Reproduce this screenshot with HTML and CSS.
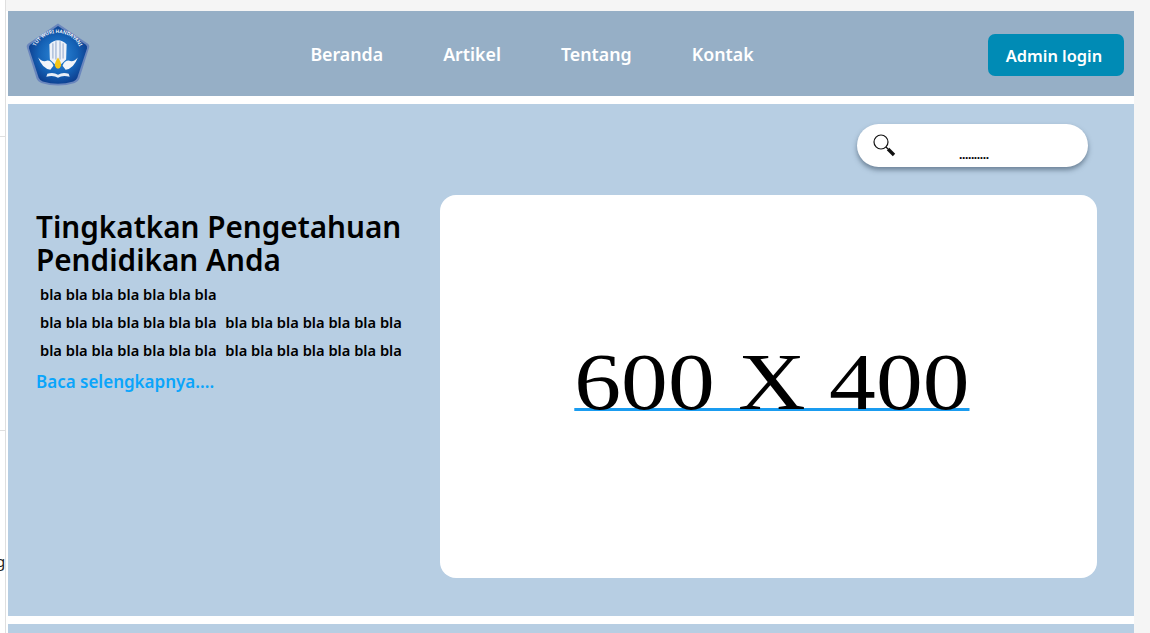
FILE: index.html
```html
<!DOCTYPE html>
<html lang="en">
<head>
    <meta charset="UTF-8">
    <meta name="viewport" content="width=device-width, initial-scale=1.0">
    <title>Tingkatkan Pengetahuan Pendidikan Anda</title>
    <link rel="stylesheet" href="styles.css">
</head>
<body>

    <!-- Sliver of the panel next to the page -->
    <div class="side-strip">
        <div class="side-line side-line-top"></div>
        <div class="side-line side-line-bottom"></div>
        <span class="edge-glyph">g</span>
    </div>

    <div class="page">
        <!-- Navbar -->
        <nav class="navbar">
            <a class="logo" href="#">
                <svg width="64" height="64" viewBox="0 0 63 63">
                    <defs>
                        <radialGradient id="shield" cx="50%" cy="50%" r="55%">
                            <stop offset="0" stop-color="#2f8ada"/>
                            <stop offset="0.6" stop-color="#1562b6"/>
                            <stop offset="1" stop-color="#0c3a8a"/>
                        </radialGradient>
                        <path id="arc" d="M8 27 A24 24 0 0 1 54 27"/>
                    </defs>
                    <path d="M31.500 0.500 L61 20.500 Q63 22 62 24.500 L52.500 55 Q51.500 58 48 59 Q31.500 64 15 59 Q11.500 58 10.500 55 L1 24.500 Q0 22 2 20.500 Z" fill="#6a86bd"/>
                    <path d="M31.500 3 L59 21.500 Q60.500 23 60 25 L50.500 54 Q49.500 56.500 46.500 57.500 Q31.500 62 16.500 57.500 Q13.500 56.500 12.500 54 L3 25 Q2.500 23 4 21.500 Z" fill="url(#shield)"/>
                    <text class="logo-motto"><textPath href="#arc" startOffset="50%" text-anchor="middle">TUT WURI HANDAYANI</textPath></text>
                    <path d="M23 21 Q31.500 13 40 21 L39.500 36 L34 41 L29 41 L23.500 36 Z" fill="#eef2f8"/>
                    <path d="M26.500 20 V35 M29.500 18 V36 M33.500 18 V36 M36.500 20 V35" stroke="#86a0c8" stroke-width="0.900"/>
                    <path d="M12 34 Q16 39 21 37 Q25 37 27 42 L24 46 Q16 45 12 34 Z" fill="#f2f5fa"/>
                    <path d="M51 34 Q47 39 42 37 Q38 37 36 42 L39 46 Q47 45 51 34 Z" fill="#f2f5fa"/>
                    <path d="M31.500 34 Q35 39 34.500 42 Q33.500 45 31.500 45 Q29.500 45 28.500 42 Q28 39 31.500 34 Z" fill="#f5c518"/>
                    <path d="M21 50 Q27 48 31.500 51 Q36 48 42 50 L43 53 Q36 51 31.500 54 Q27 51 20 53 Z" fill="#e8eef7"/>
                </svg>
            </a>
            <div class="nav-links">
                <a href="#">Beranda</a>
                <a href="#">Artikel</a>
                <a href="#">Tentang</a>
                <a href="#">Kontak</a>
            </div>
            <a class="btn-login" href="#">Admin login</a>
        </nav>

        <!-- Hero -->
        <section class="hero">
            <div class="search-row">
                <div class="search-box">
                    <svg width="24" height="24" viewBox="0 0 24 24">
                        <circle cx="9" cy="9" r="7" fill="none" stroke="#111" stroke-width="1.200"/>
                        <path d="M14 14 L16 16" stroke="#111" stroke-width="1.200"/>
                        <path d="M16 16 L22 22" stroke="#111" stroke-width="3.400"/>
                    </svg>
                    <span class="search-dots">..........</span>
                </div>
            </div>
            <div class="hero-body">
                <div class="hero-text">
                    <h1>Tingkatkan Pengetahuan Pendidikan Anda</h1>
                    <p>bla bla bla bla bla bla bla</p>
                    <p>bla bla bla bla bla bla bla <span class="gap">bla bla bla bla bla bla bla</span></p>
                    <p>bla bla bla bla bla bla bla <span class="gap">bla bla bla bla bla bla bla</span></p>
                    <a class="read-more" href="#">Baca selengkapnya....</a>
                </div>
                <div class="hero-card">
                    <a href="#">600 X 400</a>
                </div>
            </div>
        </section>

        <section class="next-section"></section>
    </div>

</body>
</html>
```

FILE: styles.css
```css
html, body {
    height: 100%;
}

body {
    font-family: "Noto Sans", Arial, sans-serif;
    background-color: #f5f5f5;
    margin: 0;
    height: 633px;
    overflow: hidden;
    padding-top: 11px;
    box-sizing: border-box;
    position: relative;
}

a {
    text-decoration: none;
}

.side-strip {
    position: absolute;
    left: 0;
    top: 0;
    width: 5px;
    height: 633px;
    background-color: #ffffff;
    border-right: 1px solid #dfdfdf;
    overflow: hidden;
}

.side-line {
    position: absolute;
    left: 0;
    width: 5px;
    height: 1px;
    background-color: #dfdfdf;
}

.side-line-top {
    top: 136px;
}

.side-line-bottom {
    top: 430px;
}

.edge-glyph {
    position: absolute;
    left: -4px;
    top: 551px;
    font-size: 15px;
    color: #222;
}

.page {
    width: 1128px;
    margin-left: 6px;
    padding-left: 2px;
    box-sizing: border-box;
    background-color: #ffffff;
}

.navbar {
    height: 85px;
    background-color: #96afc6;
    display: flex;
    align-items: center;
    justify-content: space-between;
    padding: 0 10px 0 18px;
}

.logo {
    display: flex;
    padding-top: 2px;
}

.nav-links {
    display: flex;
    gap: 60px;
    margin-left: -14px;
    padding-top: 1px;
}

.nav-links a {
    color: #ffffff;
    font-size: 17.800px;
    font-weight: 600;
}

.btn-login {
    width: 136px;
    height: 42px;
    margin-top: 2px;
    padding: 1px 4px 0 0;
    box-sizing: border-box;
    display: flex;
    align-items: center;
    justify-content: center;
    background-color: #008bb5;
    color: #ffffff;
    font-size: 16.400px;
    font-weight: 600;
    border-radius: 7px;
}

.hero {
    margin-top: 8px;
    height: 512px;
    background-color: #b7cee3;
    padding: 20px 37px 0 28px;
    box-sizing: border-box;
}

.search-row {
    display: flex;
    justify-content: flex-end;
    padding-right: 9px;
}

.search-box {
    width: 231px;
    height: 43px;
    box-sizing: border-box;
    padding: 9px 0 0 15px;
    background-color: #ffffff;
    border-radius: 22px;
    box-shadow: 0 3px 5px rgba(50, 70, 90, 0.55);
    display: flex;
    align-items: flex-start;
}

.search-dots {
    margin-left: 63px;
    font-size: 12px;
    font-weight: 700;
    line-height: 44px;
    letter-spacing: -0.400px;
    color: #000000;
}

.hero-body {
    display: flex;
    justify-content: space-between;
    margin-top: 28px;
}

.hero-text {
    width: 380px;
    padding-top: 15px;
}

h1 {
    font-size: 29.700px;
    font-weight: 600;
    line-height: 33px;
    margin: 0 0 4px 0;
    color: #000000;
}

.hero-text p {
    font-size: 14.700px;
    font-weight: 600;
    line-height: 28px;
    margin: 0 0 0 4px;
    color: #000000;
    white-space: nowrap;
}

.gap {
    margin-left: 5px;
}

.read-more {
    display: block;
    margin-top: 6px;
    color: #0aa5fb;
    font-size: 17px;
    font-weight: 600;
}

.hero-card {
    width: 657px;
    height: 383px;
    padding: 0 0 8px 6px;
    box-sizing: border-box;
    background-color: #ffffff;
    border-radius: 16px;
    display: flex;
    align-items: center;
    justify-content: center;
}

.hero-card a {
    display: inline-block;
    transform: scaleX(1.170);
    font-family: "Liberation Serif", serif;
    font-size: 80px;
    color: #000000;
    text-decoration: underline #1a9cf0 3px;
    text-decoration-skip-ink: none;
    text-underline-offset: -1px;
}

.next-section {
    margin-top: 8px;
    height: 40px;
    background-color: #b7cee3;
}

.logo-motto {
    font-size: 4.800px;
    font-weight: 600;
    fill: #ffffff;
}
```
